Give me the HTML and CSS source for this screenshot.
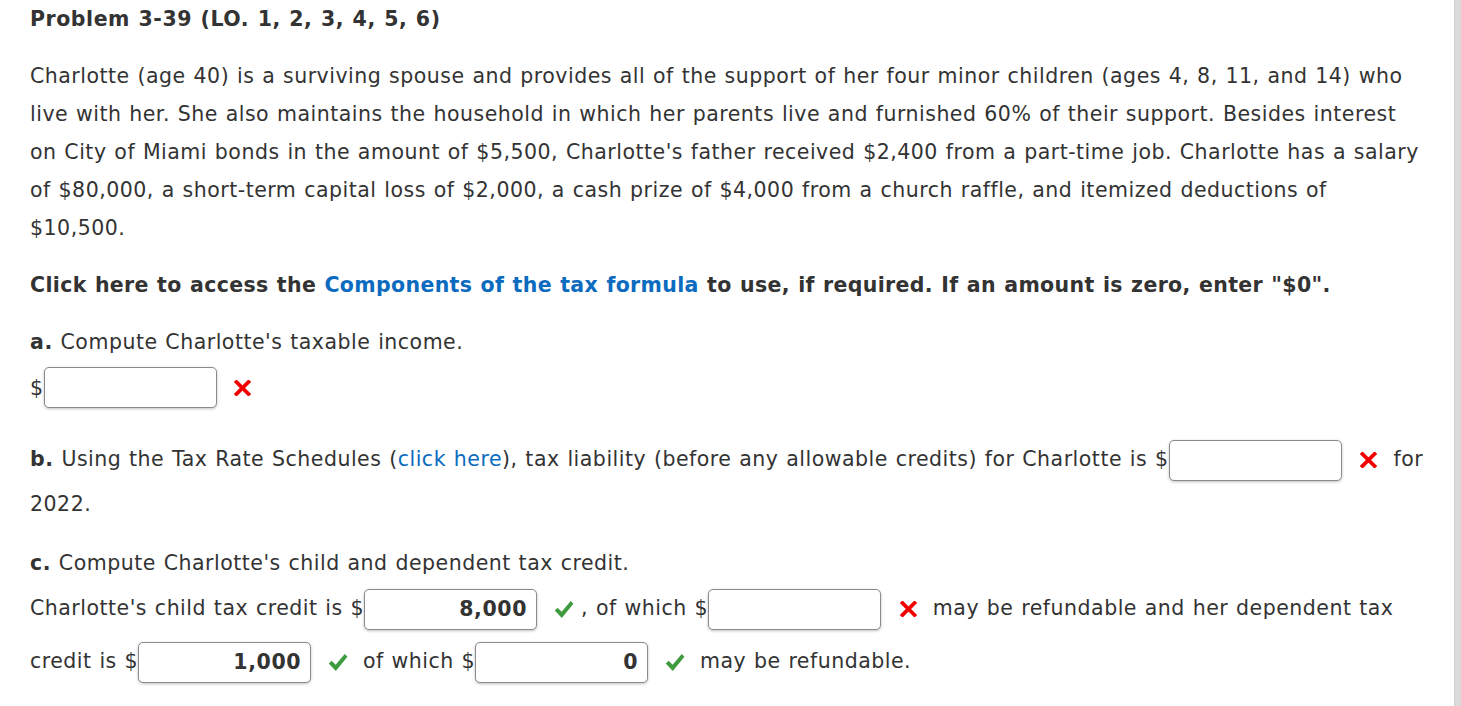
FILE: index.html
```html
<!DOCTYPE html>
<html lang="en">
<head>
<meta charset="utf-8">
<title>Problem 3-39</title>
<link rel="stylesheet" href="styles.css">
</head>
<body>
<div class="page">
  <main class="content">
    <h1 class="title">Problem 3-39 (LO. 1, 2, 3, 4, 5, 6)</h1>
    <p class="para">Charlotte (age 40) is a surviving spouse and provides all of the support of her four minor children (ages 4, 8, 11, and 14) who live with her. She also maintains the household in which her parents live and furnished 60% of their support. Besides interest on City of Miami bonds in the amount of $5,500, Charlotte's father received $2,400 from a part-time job. Charlotte has a salary of $80,000, a short-term capital loss of $2,000, a cash prize of $4,000 from a church raffle, and itemized deductions of $10,500.</p>
    <p class="para strong">Click here to access the <a class="link" href="#">Components of the tax formula</a> to use, if required. If an amount is zero, enter "$0".</p>
    <p class="para"><b>a.</b> Compute Charlotte's taxable income.</p>
    <div class="answer-row">$<span class="field"></span><span class="mark wrong"><svg viewBox="0 0 16 16" width="17" height="16"><path d="M2 2 L14 14 M14 2 L2 14" stroke="#f20000" stroke-width="3.8" stroke-linecap="square" fill="none"/></svg></span></div>
    <p class="para q-b"><b>b.</b> Using the Tax Rate Schedules (<a class="link" href="#">click here</a>), tax liability (before any allowable credits) for Charlotte is $<span class="field"></span><span class="mark wrong"><svg viewBox="0 0 16 16" width="17" height="16"><path d="M2 2 L14 14 M14 2 L2 14" stroke="#f20000" stroke-width="3.8" stroke-linecap="square" fill="none"/></svg></span> for 2022.</p>
    <p class="para c-head"><b>c.</b> Compute Charlotte's child and dependent tax credit.</p>
    <p class="para q-c">Charlotte's child tax credit is $<span class="field">8,000</span><span class="mark right"><svg viewBox="0 0 21 21" width="21" height="21"><path d="M0.8 11.6 L3.9 8.6 L8 12.9 L17.6 1.6 L20.4 4.4 L8.2 19.4 Z" fill="#3f9b3f"/></svg></span>, of which $<span class="field"></span><span class="mark wrong"><svg viewBox="0 0 16 16" width="17" height="16"><path d="M2 2 L14 14 M14 2 L2 14" stroke="#f20000" stroke-width="3.8" stroke-linecap="square" fill="none"/></svg></span> may be refundable and her dependent tax credit is $<span class="field">1,000</span><span class="mark right"><svg viewBox="0 0 21 21" width="21" height="21"><path d="M0.8 11.6 L3.9 8.6 L8 12.9 L17.6 1.6 L20.4 4.4 L8.2 19.4 Z" fill="#3f9b3f"/></svg></span> of which $<span class="field">0</span><span class="mark right"><svg viewBox="0 0 21 21" width="21" height="21"><path d="M0.8 11.6 L3.9 8.6 L8 12.9 L17.6 1.6 L20.4 4.4 L8.2 19.4 Z" fill="#3f9b3f"/></svg></span> may be refundable.</p>
  </main>
  <div class="rail"></div>
</div>
</body>
</html>
```

FILE: styles.css
```css
html, body {
  margin: 0;
  padding: 0;
  background: #ffffff;
}
body {
  font-family: "DejaVu Sans", Verdana, sans-serif;
  font-size: 20.5px;
  letter-spacing: 0.5px;
  word-spacing: 0.8px;
  color: #333333;
}
b, .title {
  letter-spacing: 0.55px;
}
.strong {
  letter-spacing: 0.35px;
}
.page {
  display: flex;
  min-height: 706px;
}
.content {
  flex: 1;
  padding: 0 27px 0 30px;
}
.rail {
  width: 6px;
  background: #dadada;
  border-left: 1px solid #cfcfcf;
}
.title {
  margin: 0;
  font-size: 20.5px;
  font-weight: bold;
  line-height: 38px;
}
.para {
  margin: 19px 0 0 0;
  line-height: 38px;
}
.strong {
  font-weight: bold;
}
.link {
  color: #0b6bbf;
  text-decoration: none;
}
.answer-row {
  display: flex;
  align-items: center;
  margin-top: 6px;
  height: 41px;
}
.field {
  display: inline-flex;
  align-items: center;
  justify-content: flex-end;
  box-sizing: border-box;
  width: 173px;
  height: 41px;
  border: 1px solid #8a8a8a;
  border-radius: 5px;
  box-shadow: 0 1px 3px rgba(0,0,0,0.25);
  background: #fff;
  padding: 0 9px;
  font-weight: bold;
  font-size: 20.5px;
  letter-spacing: 0.6px;
  color: #333;
  vertical-align: middle;
}
.mark {
  display: inline-flex;
  align-items: center;
  justify-content: center;
  width: 20px;
  margin: 0 7px 0 17px;
  vertical-align: middle;
}
.answer-row .mark {
  margin-left: 16px;
}
.q-b {
  margin-top: 29px;
  line-height: 45px;
}
.c-head {
  margin-top: 17px;
}
.q-c {
  margin-top: 0;
  line-height: 53px;
}
```
